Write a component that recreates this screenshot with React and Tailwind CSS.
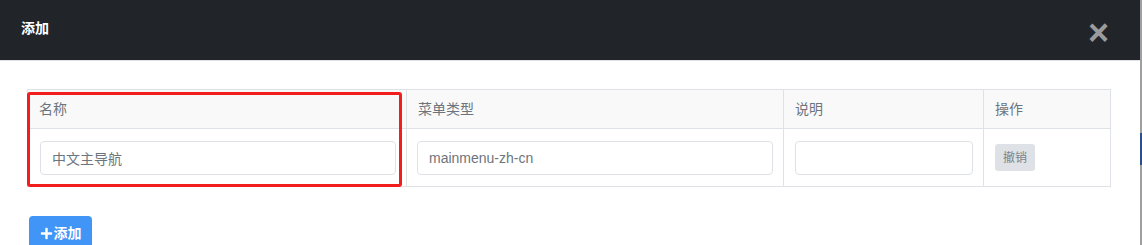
import React from "react";
import { FaPlus } from "react-icons/fa";

const font = { fontFamily: '"Liberation Sans", "Noto Sans CJK SC", sans-serif' };

const columns = [
  { label: "名称", width: "w-[379px]" },
  { label: "菜单类型", width: "w-[377px]" },
  { label: "说明", width: "w-[200px]" },
  { label: "操作", width: "" },
];

const App = () => {
  return (
    <div className="flex h-[245px] w-[1142px] overflow-hidden bg-white" style={font}>
      <div className="w-[1140px] flex flex-col">
        {/* Modal header */}
        <div className="h-[61px] shrink-0 bg-[#212529] flex items-center justify-between pl-[21px] pr-[31px] border-b border-[#dee2e6]">
          <h5 className="text-[14px] font-bold text-white -mt-[4px]">添加</h5>
          <button className="text-[#9a9b9c] text-[36px] font-bold leading-none mt-[6px]">×</button>
        </div>

        {/* Modal body */}
        <div className="shrink-0 pl-[27px] pr-[29px] pt-[28px]">
          <table className="w-full border-collapse text-[14px] table-fixed">
            <thead>
              <tr className="bg-[#f9f9f9]">
                {columns.map((c) => (
                  <th
                    key={c.label}
                    className={`${c.width} h-[39px] border border-[#dee2e6] px-[11px] text-left font-normal text-[#6c757d]`}
                  >
                    {c.label}
                  </th>
                ))}
              </tr>
            </thead>
            <tbody>
              <tr>
                <td className="relative h-[58px] border border-[#dee2e6] pl-[12px] pr-[10px]">
                  <input
                    type="text"
                    defaultValue="中文主导航"
                    className="w-full h-[34px] border border-[#dee2e6] rounded-[4px] px-[11px] text-[14px] text-[#6c757d] outline-none"
                  />
                  {/* highlight box */}
                  <div className="absolute left-[-1px] top-[-37px] w-[375px] h-[95px] border-[3px] border-[#f21d1d] rounded-[3px] pointer-events-none" />
                </td>
                <td className="h-[58px] border border-[#dee2e6] pl-[10px] pr-[10px]">
                  <input
                    type="text"
                    defaultValue="mainmenu-zh-cn"
                    className="w-full h-[34px] border border-[#dee2e6] rounded-[4px] px-[11px] text-[14px] text-[#6c757d] outline-none"
                  />
                </td>
                <td className="h-[58px] border border-[#dee2e6] pl-[11px] pr-[10px]">
                  <input
                    type="text"
                    className="w-full h-[34px] border border-[#dee2e6] rounded-[4px] px-[11px] text-[14px] text-[#6c757d] outline-none"
                  />
                </td>
                <td className="h-[58px] border border-[#dee2e6] pl-[11px]">
                  <button className="h-[27px] w-[40px] rounded-[3px] bg-[#dee2e6] text-[12px] text-[#7b828a]">
                    撤销
                  </button>
                </td>
              </tr>
            </tbody>
          </table>

          <button className="mt-[29px] ml-[2px] h-[34px] w-[63px] rounded-t-[4px] bg-[#4095f6] text-white text-[14px] font-bold flex items-center justify-center gap-[1px]">
            <FaPlus className="text-[13px]" />
            添加
          </button>
        </div>
      </div>

      {/* page scrollbar edge */}
      <div className="w-[2px] h-full bg-[#9f9f9f] flex flex-col">
        <div className="h-[133px]" />
        <div className="h-[32px] bg-[#2a4f8a]" />
      </div>
    </div>
  );
};

export default App;
